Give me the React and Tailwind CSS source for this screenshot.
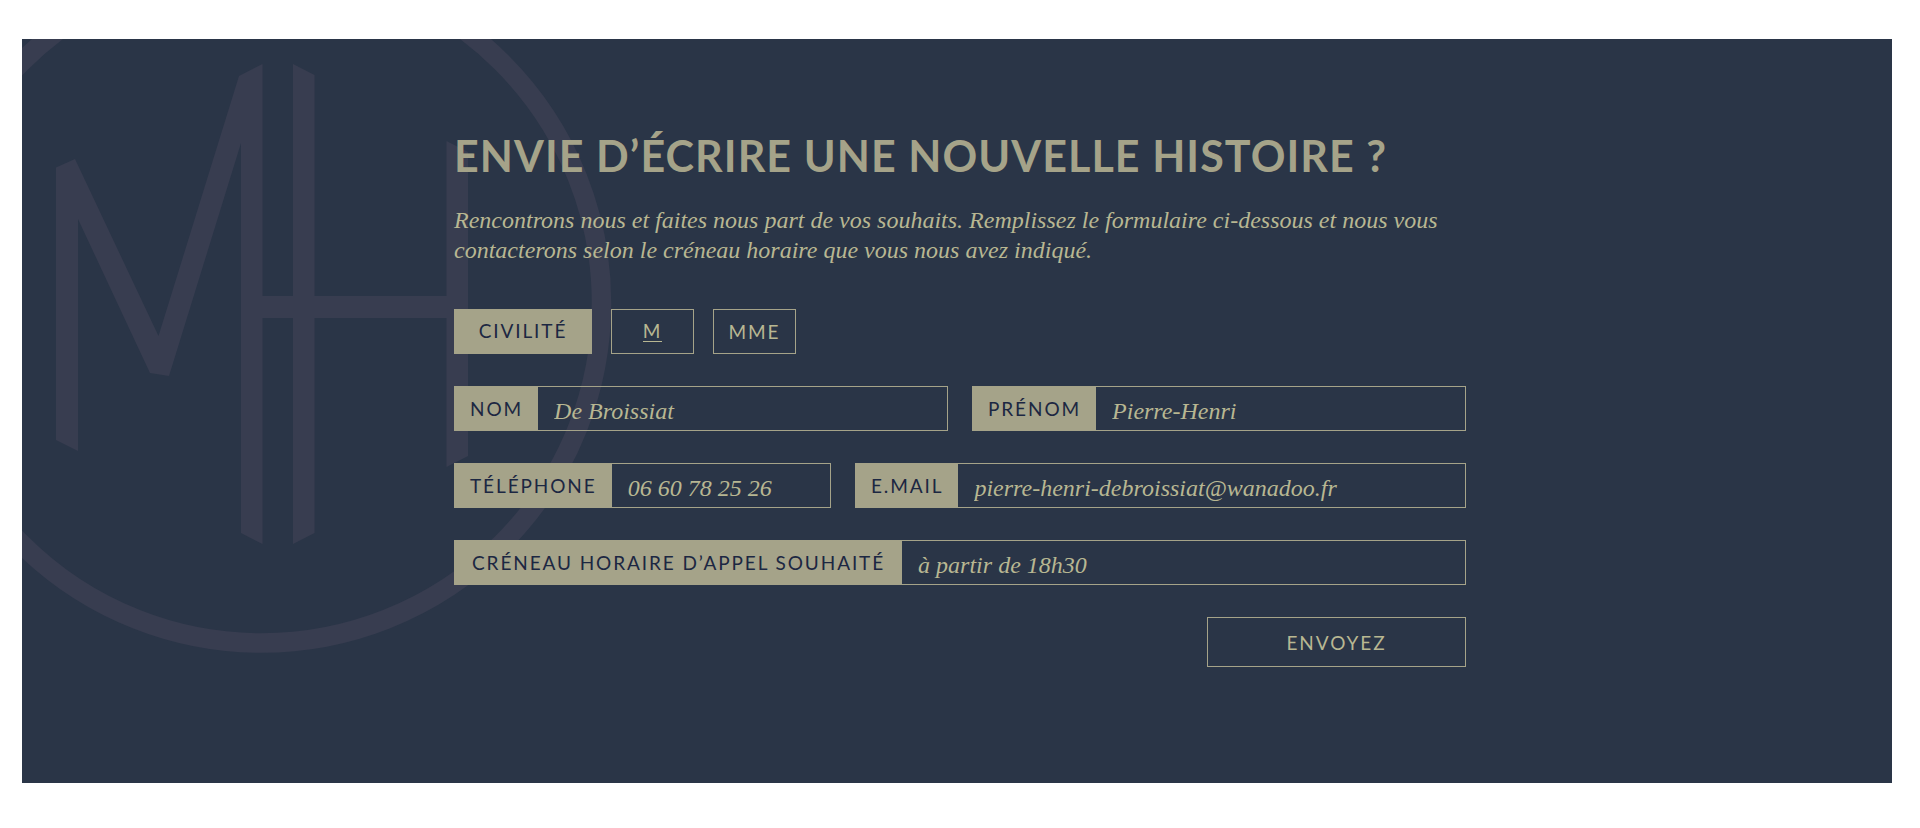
import React, { useState } from 'react';

const SANS = "font-['Lato','Liberation_Sans',sans-serif]";
const SERIF = "font-['Liberation_Serif',serif]";

function Monogram() {
  return (
    <svg
      className="absolute left-0 top-0 w-[590px] h-[620px] fill-[#383d50] pointer-events-none"
      viewBox="22 39 590 620"
      aria-hidden="true"
    >
      <circle cx="261.5" cy="303" r="340" fill="none" stroke="#383d50" strokeWidth="19.5" />
      {/* M */}
      <path d="M56 167.5 75 159 158.5 336 239 76 262.5 64V544L241 533V143L169 376 150 373 78 219V451L56 440Z" />
      {/* H */}
      <path d="M293 64 314.5 75V533L293 544Z" />
      <path d="M446.5 141 468 152V456L446.5 467Z" />
      <path d="M262 296H447V318H262Z" />
    </svg>
  );
}

function Field({ id, label, labelPadding = 'px-[15px]', type = 'text', value, onChange }) {
  return (
    <div className="flex min-w-0 h-[45px] border border-[#a5a389]">
      <label
        htmlFor={id}
        className={`${SANS} ${labelPadding} flex items-center shrink-0 bg-[#a5a389] pt-0.5 text-[19px] tracking-widest text-[#1c2742]`}
      >
        {label}
      </label>
      <input
        id={id}
        name={id}
        type={type}
        value={value}
        onChange={onChange}
        className={`${SERIF} flex-1 min-w-0 bg-transparent px-4 pt-1 text-2xl italic text-[#b8b792] outline-none`}
      />
    </div>
  );
}

function TitleOption({ value, selected, onSelect }) {
  return (
    <label className="relative flex items-center justify-center w-[83px] h-[45px] border border-[#a5a389] cursor-pointer">
      <input
        type="radio"
        name="civilite"
        value={value}
        checked={selected}
        onChange={() => onSelect(value)}
        className="sr-only"
      />
      <span className={selected ? 'border-b border-[#b8b792] leading-5' : 'leading-5'}>{value}</span>
    </label>
  );
}

function App() {
  const [form, setForm] = useState({
    civilite: 'M',
    nom: 'De Broissiat',
    prenom: 'Pierre-Henri',
    telephone: '06 60 78 25 26',
    email: 'pierre-henri-debroissiat@wanadoo.fr',
    creneau: 'à partir de 18h30',
  });

  const update = (key) => (e) => setForm({ ...form, [key]: e.target.value });

  return (
    <main className="bg-white pt-[39px] pl-[22px] pr-7 pb-11">
      <section className="relative overflow-hidden bg-[#2a3547] pt-[90px] pb-[116px] pl-1.5">
        <Monogram />
        <div className="relative mx-auto max-w-[1012px]">
          <h1 className={`${SANS} text-[43px] leading-[54px] font-bold tracking-wide text-[#a5a389]`}>
            ENVIE D’ÉCRIRE UNE NOUVELLE HISTOIRE ?
          </h1>
          <p className={`${SERIF} mt-[22px] text-2xl leading-[30px] italic text-[#b8b792]`}>
            Rencontrons nous et faites nous part de vos souhaits. Remplissez le formulaire ci-dessous et nous vous
            contacterons selon le créneau horaire que vous nous avez indiqué.
          </p>

          <form className="mt-11 flex flex-col gap-8" onSubmit={(e) => e.preventDefault()}>
            <div
              role="radiogroup"
              aria-labelledby="civilite-label"
              className={`${SANS} flex gap-[19px] text-[19px] tracking-widest text-[#b8b792]`}
            >
              <span
                id="civilite-label"
                className="flex items-center justify-center w-[138px] h-[45px] bg-[#a5a389] text-[#1c2742]"
              >
                CIVILITÉ
              </span>
              <TitleOption
                value="M"
                selected={form.civilite === 'M'}
                onSelect={(v) => setForm({ ...form, civilite: v })}
              />
              <TitleOption
                value="MME"
                selected={form.civilite === 'MME'}
                onSelect={(v) => setForm({ ...form, civilite: v })}
              />
            </div>

            <div className="grid grid-cols-2 gap-6">
              <Field id="nom" label="NOM" value={form.nom} onChange={update('nom')} />
              <Field id="prenom" label="PRÉNOM" value={form.prenom} onChange={update('prenom')} />
            </div>

            <div className="grid grid-cols-[377fr_611fr] gap-6">
              <Field
                id="telephone"
                label="TÉLÉPHONE"
                type="tel"
                value={form.telephone}
                onChange={update('telephone')}
              />
              <Field id="email" label="E.MAIL" type="email" value={form.email} onChange={update('email')} />
            </div>

            <Field
              id="creneau"
              label="CRÉNEAU HORAIRE D’APPEL SOUHAITÉ"
              labelPadding="px-[17px]"
              value={form.creneau}
              onChange={update('creneau')}
            />

            <button
              type="submit"
              className={`${SANS} self-end w-[259px] h-[50px] border border-[#a5a389] pt-0.5 text-[19px] tracking-widest text-[#b8b792] cursor-pointer`}
            >
              ENVOYEZ
            </button>
          </form>
        </div>
      </section>
    </main>
  );
}

export default App;
